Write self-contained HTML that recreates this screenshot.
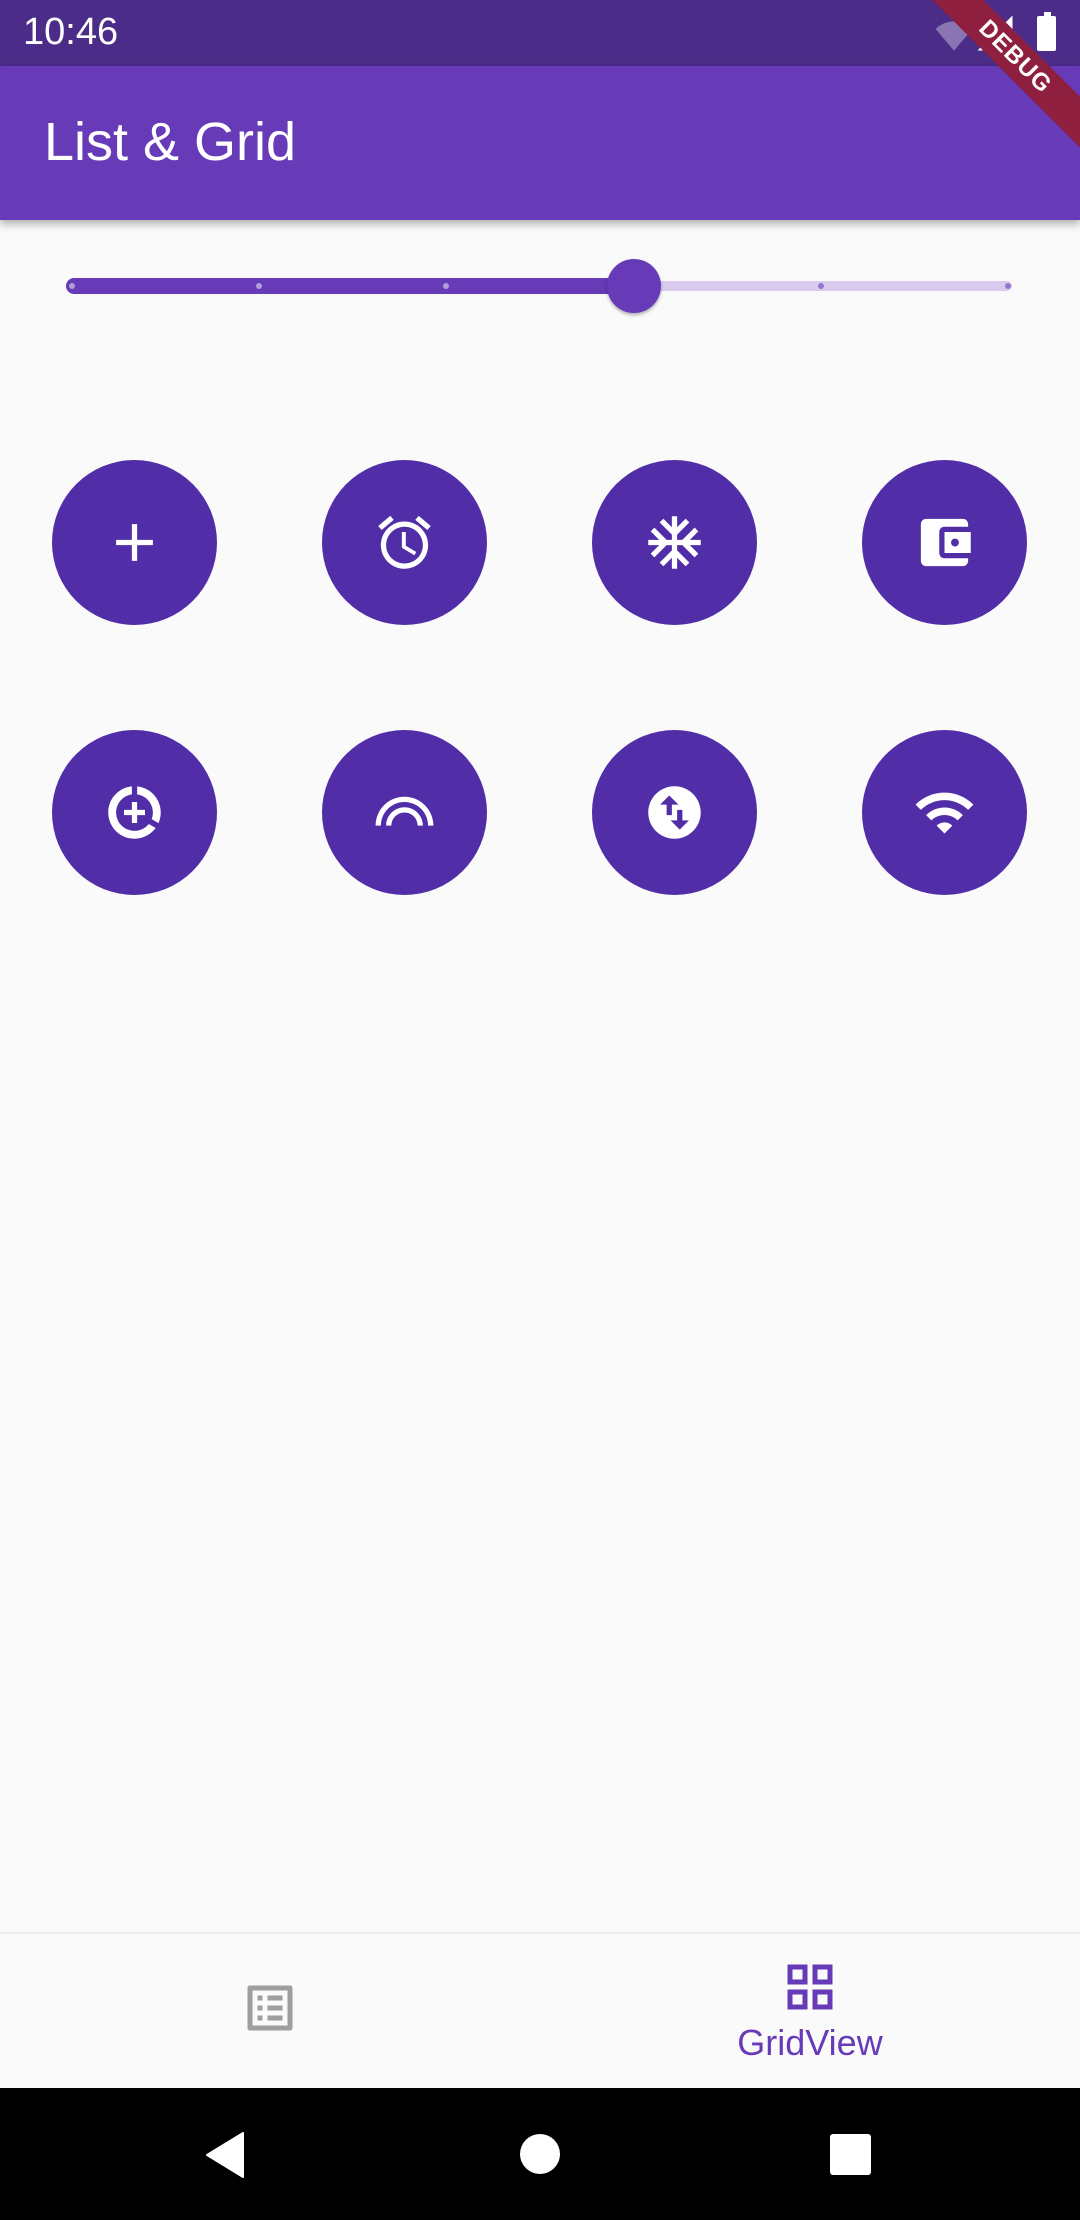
<!DOCTYPE html>
<html><head><meta charset="utf-8"><style>
body{margin:0;width:1080px;height:2220px;background:#fafafa;position:relative;overflow:hidden;font-family:"Liberation Sans",Roboto,sans-serif}
.abs{position:absolute}
.c{position:absolute;width:165px;height:165px;border-radius:50%;background:#512da8;display:flex;align-items:center;justify-content:center}
.c svg{width:63px;height:63px;fill:#fff}
</style></head><body>
<div class="abs" style="left:0;top:0;width:1080px;height:66px;background:#4b2c89"></div>
<div class="abs" style="left:23px;top:11px;color:#fff;font-size:38px">10:46</div>
<svg class="abs" style="left:932px;top:14px" width="44" height="40" viewBox="0 0 24 24"><path fill="#fff" opacity=".35" d="M1 9l11 13L23 9C16.93 2.93 7.08 2.93 1 9z"/></svg>
<svg class="abs" style="left:974px;top:12px" width="42" height="42" viewBox="0 0 24 24"><path fill="#fff" d="M2 22h20V2z"/></svg>
<div class="abs" style="left:1037px;top:16px;width:19px;height:35px;background:#fff;border-radius:2px"></div>
<div class="abs" style="left:1044px;top:12px;width:7px;height:5px;background:#fff"></div>
<div class="abs" style="left:0;top:66px;width:1080px;height:154px;background:#673ab7;box-shadow:0 4px 8px rgba(0,0,0,.3)"></div>
<div class="abs" style="left:44px;top:111px;color:#fff;font-size:54px">List &amp; Grid</div>
<div class="abs" style="left:865px;top:39px;width:300px;height:36px;background:#8e1f3f;transform:rotate(45deg);color:#fff;font-weight:bold;font-size:24px;text-align:center;line-height:36px;letter-spacing:1px">DEBUG</div>
<!-- slider -->
<div class="abs" style="left:640px;top:281px;width:372px;height:10px;border-radius:5px;background:#d9cbee"></div>
<div class="abs" style="left:66px;top:278px;width:574px;height:16px;border-radius:8px;background:#673ab7"></div>
<div class="abs" style="left:69px;top:283px;width:6px;height:6px;border-radius:50%;background:#b39ddb"></div>
<div class="abs" style="left:256px;top:283px;width:6px;height:6px;border-radius:50%;background:#b39ddb"></div>
<div class="abs" style="left:443px;top:283px;width:6px;height:6px;border-radius:50%;background:#b39ddb"></div>
<div class="abs" style="left:818px;top:283px;width:6px;height:6px;border-radius:50%;background:#9575cd"></div>
<div class="abs" style="left:1005px;top:283px;width:6px;height:6px;border-radius:50%;background:#9575cd"></div>
<div class="abs" style="left:607px;top:259px;width:54px;height:54px;border-radius:50%;background:#673ab7;box-shadow:0 2px 3px rgba(0,0,0,.3)"></div>
<!-- circles -->
<div class="c" style="left:52px;top:460px"><svg viewBox="0 0 24 24"><path d="M19 13h-6v6h-2v-6H5v-2h6V5h2v6h6v2z"/></svg></div>
<div class="c" style="left:322px;top:460px"><svg viewBox="0 0 24 24"><path d="M22 5.72l-4.6-3.86-1.29 1.53 4.6 3.86L22 5.72zM7.88 3.39L6.6 1.86 2 5.71l1.29 1.53 4.59-3.85zM12.5 8H11v6l4.75 2.85.75-1.23-4-2.37V8zM12 4c-4.97 0-9 4.030-9 9s4.02 9 9 9c4.97 0 9-4.03 9-9s-4.03-9-9-9zm0 16c-3.87 0-7-3.13-7-7s3.13-7 7-7 7 3.13 7 7-3.13 7-7 7z"/></svg></div>
<div class="c" style="left:592px;top:460px"><svg viewBox="0 0 24 24"><path d="M22 11h-4.17l3.24-3.240-1.41-1.42L15 11h-2V9l4.66-4.66-1.42-1.41L13 6.17V2h-2v4.17L7.76 2.93 6.34 4.34 11 9v2H9L4.34 6.34 2.93 7.76 6.17 11H2v2h4.17l-3.24 3.24 1.41 1.42L9 13h2v2l-4.66 4.66 1.42 1.41L11 17.83V22h2v-4.17l3.24 3.24 1.42-1.41L13 15v-2h2l4.66 4.66 1.41-1.42L17.83 13H22z"/></svg></div>
<div class="c" style="left:862px;top:460px"><svg viewBox="0 0 24 24"><path d="M21 18v1c0 1.1-.9 2-2 2H5c-1.110 0-2-.9-2-2V5c0-1.1.89-2 2-2h14c1.1 0 2 .9 2 2v1h-9c-1.11 0-2 .9-2 2v8c0 1.1.89 2 2 2h9zm-9-2h10V8H12v8zm4-2.5c-.83 0-1.5-.67-1.5-1.5s.67-1.5 1.5-1.5 1.5.67 1.5 1.5-.67 1.5-1.5 1.5z"/></svg></div>
<div class="c" style="left:52px;top:730px"><svg viewBox="0 0 24 24"><path d="M11 8v3H8v2h3v3h2v-3h3v-2h-3V8h-2zm2-5.95v3.03c3.39.49 6 3.39 6 6.92 0 .9-.18 1.75-.48 2.54l2.6 1.53c.56-1.24.88-2.62.88-4.070 0-5.18-3.95-9.45-9-9.95zM12 19c-3.87 0-7-3.13-7-7 0-3.53 2.61-6.43 6-6.92V2.05c-5.06.5-9 4.76-9 9.950 0 5.52 4.47 10 9.99 10 3.31 0 6.24-1.61 8.06-4.09l-2.6-1.53C16.17 17.98 14.21 19 12 19z"/></svg></div>
<div class="c" style="left:322px;top:730px"><svg viewBox="0 0 24 24"><path d="M12 10c-3.86 0-7 3.14-7 7h2c0-2.76 2.24-5 5-5s5 2.24 5 5h2c0-3.86-3.14-7-7-7zm0-4C5.93 6 1 10.93 1 17h2c0-4.96 4.04-9 9-9s9 4.04 9 9h2c0-6.07-4.93-11-11-11z"/></svg></div>
<div class="c" style="left:592px;top:730px"><svg viewBox="0 0 24 24"><path d="M12 2C6.48 2 2 6.48 2 12s4.48 10 10 10 10-4.48 10-10S17.52 2 12 2zM6.5 9L10 5.5 13.5 9H11v4H9V9H6.5zm11 6L14 18.5 10.5 15H13v-4h2v4h2.5z"/></svg></div>
<div class="c" style="left:862px;top:730px"><svg viewBox="0 0 24 24"><path d="M1 9l2 2c4.97-4.970 13.03-4.97 18 0l2-2C16.93 2.93 7.08 2.93 1 9zm8 8l3 3 3-3c-1.65-1.66-4.34-1.66-6 0zm-4-4l2 2c2.76-2.76 7.24-2.76 10 0l2-2C15.14 9.14 8.87 9.14 5 13z"/></svg></div>
<!-- bottom nav -->
<div class="abs" style="left:0;top:1932px;width:1080px;height:2px;background:#eee"></div>
<svg class="abs" style="left:240px;top:1978px" width="60" height="60" viewBox="0 0 24 24"><path fill="#9e9e9e" d="M19 5v14H5V5h14m1.1-2H3.9c-.5 0-.9.4-.9.9v16.2c0 .4.4.9.9.9h16.2c.4 0 .9-.5.9-.9V3.9c0-.5-.5-.9-.9-.9zM11 7h6v2h-6V7zm0 4h6v2h-6v-2zm0 4h6v2h-6zM7 7h2v2H7zm0 4h2v2H7zm0 4h2v2H7z"/></svg>
<svg class="abs" style="left:780px;top:1957px" width="60" height="60" viewBox="0 0 24 24"><path fill="#673ab7" d="M3 3v8h8V3H3zm6 6H5V5h4v4zm-6 4v8h8v-8H3zm6 6H5v-4h4v4zm4-16v8h8V3h-8zm6 6h-4V5h4v4zm-6 4v8h8v-8h-8zm6 6h-4v-4h4v4z"/></svg>
<div class="abs" style="left:710px;top:2022px;width:200px;text-align:center;color:#673ab7;font-size:36px">GridView</div>
<div class="abs" style="left:0;top:2088px;width:1080px;height:132px;background:#000"></div>
<svg class="abs" style="left:205px;top:2132px" width="40" height="46" viewBox="0 0 40 46"><path fill="#fff" d="M38 1v44L2 23z" stroke="#fff" stroke-linejoin="round" stroke-width="2"/></svg>
<div class="abs" style="left:520px;top:2134px;width:40px;height:40px;border-radius:50%;background:#fff"></div>
<div class="abs" style="left:830px;top:2134px;width:41px;height:41px;border-radius:3px;background:#fff"></div>
</body></html>
